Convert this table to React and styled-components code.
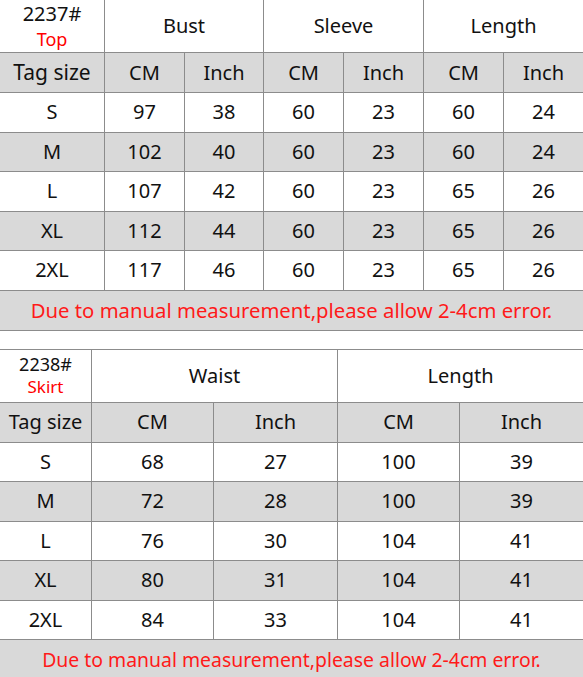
import React from 'react';
import styled, { createGlobalStyle } from 'styled-components';

const GlobalStyle = createGlobalStyle`
  html, body {
    margin: 0;
    padding: 0;
    background: #ffffff;
  }
  body {
    font-family: "Noto Sans", "Open Sans", "Liberation Sans", sans-serif;
    color: #111;
  }
`;

const Page = styled.div`
  width: 583px;
  height: 677px;
  overflow: hidden;
  display: flex;
  flex-direction: column;
  gap: 18px;
`;

const Table = styled.table`
  border-collapse: collapse;
  table-layout: fixed;
  width: 584px;
  margin-left: -1px;
  margin-top: ${(p) => (p.$first ? '-1px' : '0')};
`;

const Tr = styled.tr`
  height: ${(p) => p.$h || 39.5}px;
  background: ${(p) => (p.$gray ? '#d9d9d9' : '#ffffff')};
`;

const Td = styled.td`
  border: 1px solid #8c8c8c;
  padding: 0;
  text-align: center;
  vertical-align: middle;
  font-size: ${(p) => p.$size || 20}px;
  line-height: 1.1;
  white-space: nowrap;
  overflow: hidden;
`;

const Code = styled.div`
  font-size: ${(p) => p.$size}px;
  line-height: 1.35;
  color: #111;
`;

const Kind = styled.div`
  font-size: ${(p) => p.$size}px;
  line-height: 1.35;
  color: #ff0000;
`;

const Note = styled(Td)`
  color: #ff1a1a;
`;

const topRows = [
  ['S', 97, 38, 60, 23, 60, 24],
  ['M', 102, 40, 60, 23, 60, 24],
  ['L', 107, 42, 60, 23, 65, 26],
  ['XL', 112, 44, 60, 23, 65, 26],
  ['2XL', 117, 46, 60, 23, 65, 26],
];

const skirtRows = [
  ['S', 68, 27, 100, 39],
  ['M', 72, 28, 100, 39],
  ['L', 76, 30, 104, 41],
  ['XL', 80, 31, 104, 41],
  ['2XL', 84, 33, 104, 41],
];

const NOTE = 'Due to manual measurement,please allow 2-4cm error.';

const TopTable = () => (
  <Table $first>
    <colgroup>
      <col style={{ width: 105 }} />
      <col style={{ width: 80 }} />
      <col style={{ width: 79 }} />
      <col style={{ width: 80 }} />
      <col style={{ width: 80 }} />
      <col style={{ width: 80 }} />
      <col style={{ width: 80 }} />
    </colgroup>
    <tbody>
      <Tr $h={53}>
        <Td>
          <Code $size={20}>2237#</Code>
          <Kind $size={18}>Top</Kind>
        </Td>
        <Td colSpan={2}>Bust</Td>
        <Td colSpan={2}>Sleeve</Td>
        <Td colSpan={2}>Length</Td>
      </Tr>
      <Tr $gray $h={40}>
        <Td $size={21}>Tag size</Td>
        <Td>CM</Td>
        <Td>Inch</Td>
        <Td>CM</Td>
        <Td>Inch</Td>
        <Td>CM</Td>
        <Td>Inch</Td>
      </Tr>
      {topRows.map((row, i) => (
        <Tr key={row[0]} $gray={i % 2 === 1}>
          {row.map((v, j) => (
            <Td key={j}>{v}</Td>
          ))}
        </Tr>
      ))}
      <Tr $gray $h={40}>
        <Note colSpan={7} $size={20.3}>{NOTE}</Note>
      </Tr>
    </tbody>
  </Table>
);

const SkirtTable = () => (
  <Table>
    <colgroup>
      <col style={{ width: 92 }} />
      <col style={{ width: 122 }} />
      <col style={{ width: 124 }} />
      <col style={{ width: 122 }} />
      <col style={{ width: 124 }} />
    </colgroup>
    <tbody>
      <Tr $h={53}>
        <Td>
          <Code $size={18}>2238#</Code>
          <Kind $size={17}>Skirt</Kind>
        </Td>
        <Td colSpan={2}>Waist</Td>
        <Td colSpan={2}>Length</Td>
      </Tr>
      <Tr $gray $h={40}>
        <Td>Tag size</Td>
        <Td>CM</Td>
        <Td>Inch</Td>
        <Td>CM</Td>
        <Td>Inch</Td>
      </Tr>
      {skirtRows.map((row, i) => (
        <Tr key={row[0]} $gray={i % 2 === 1}>
          {row.map((v, j) => (
            <Td key={j}>{v}</Td>
          ))}
        </Tr>
      ))}
      <Tr $gray $h={40}>
        <Note colSpan={5} $size={19.4}>{NOTE}</Note>
      </Tr>
    </tbody>
  </Table>
);

export default function App() {
  return (
    <>
      <GlobalStyle />
      <Page>
        <TopTable />
        <SkirtTable />
      </Page>
    </>
  );
}
